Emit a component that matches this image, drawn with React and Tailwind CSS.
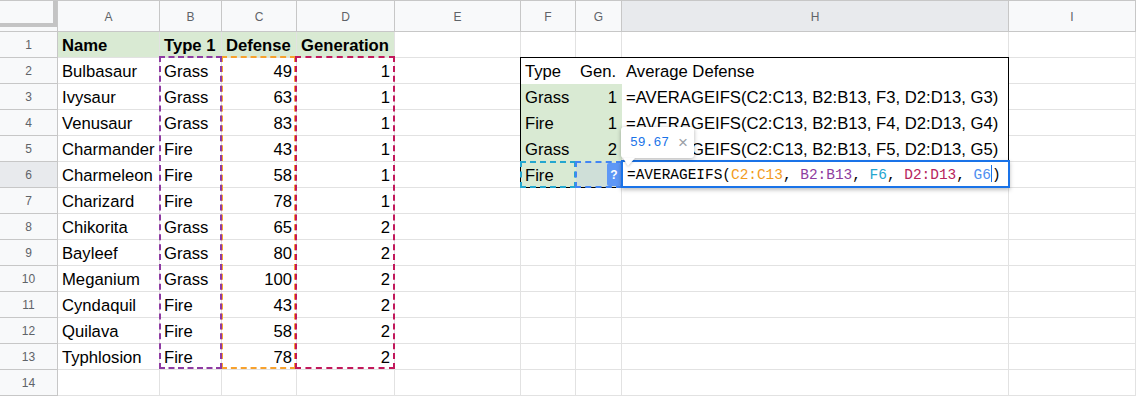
import React from 'react';

const COLS = ['A', 'B', 'C', 'D', 'E', 'F', 'G', 'H', 'I'];

const pokemon = [
    ['Bulbasaur', 'Grass', 49, 1],
    ['Ivysaur', 'Grass', 63, 1],
    ['Venusaur', 'Grass', 83, 1],
    ['Charmander', 'Fire', 43, 1],
    ['Charmeleon', 'Fire', 58, 1],
    ['Charizard', 'Fire', 78, 1],
    ['Chikorita', 'Grass', 65, 2],
    ['Bayleef', 'Grass', 80, 2],
    ['Meganium', 'Grass', 100, 2],
    ['Cyndaquil', 'Fire', 43, 2],
    ['Quilava', 'Fire', 58, 2],
    ['Typhlosion', 'Fire', 78, 2],
];

// summary table in F2:H6
const summary = {
    2: ['Type', 'Gen.', 'Average Defense'],
    3: ['Grass', 1, '=AVERAGEIFS(C2:C13, B2:B13, F3, D2:D13, G3)'],
    4: ['Fire', 1, '=AVERAGEIFS(C2:C13, B2:B13, F4, D2:D13, G4)'],
    5: ['Grass', 2, '=AVERAGEIFS(C2:C13, B2:B13, F5, D2:D13, G5)'],
    6: ['Fire', '', ''],
};

function Cell({ children, right, bold, green, inBox, bg }) {
    const border = inBox ? 'border-transparent' : 'border-[#e2e2e2]';
    const fill = bg || (green ? 'bg-[#d9ead3]' : 'bg-white');
    return (
        <div
            className={`h-[26px] border-r border-b ${border} ${fill} flex items-center px-[4px] pt-[1px] whitespace-nowrap overflow-visible ${right ? 'justify-end' : ''} ${bold ? 'font-bold' : ''}`}
        >
            {children}
        </div>
    );
}

function RowHeader({ n, active }) {
    return (
        <div
            className={`h-[26px] border-r border-b border-[#c7c7c7] ${active ? 'bg-[#e8eaed]' : 'bg-[#f8f9fa]'} flex items-center justify-center text-[12px] text-[#5f6368]`}
        >
            {n}
        </div>
    );
}

function Row({ n }) {
    const cells = [];
    if (n === 1) {
        cells.push(
            <Cell key="a" bold green>Name</Cell>,
            <Cell key="b" bold green>Type 1</Cell>,
            <Cell key="c" bold green>Defense</Cell>,
            <Cell key="d" bold green>Generation</Cell>
        );
    } else if (n <= 13) {
        const p = pokemon[n - 2];
        cells.push(
            <Cell key="a">{p[0]}</Cell>,
            <Cell key="b">{p[1]}</Cell>,
            <Cell key="c" right>{p[2]}</Cell>,
            <Cell key="d" right>{p[3]}</Cell>
        );
    } else {
        cells.push(<Cell key="a" />, <Cell key="b" />, <Cell key="c" />, <Cell key="d" />);
    }
    cells.push(<Cell key="e" />);

    const s = summary[n];
    if (s) {
        const green = n > 2;
        cells.push(
            <Cell key="f" inBox green={green}>{s[0]}</Cell>,
            <Cell key="g" inBox green={green && n !== 6} bg={n === 6 ? 'bg-[#cfdfd8]' : ''} right={n > 2}>
                {s[1]}
            </Cell>,
            <Cell key="h" inBox>{s[2]}</Cell>
        );
    } else {
        cells.push(<Cell key="f" />, <Cell key="g" />, <Cell key="h" />);
    }
    cells.push(<Cell key="i" />);

    return (
        <>
            <RowHeader n={n} active={n === 6} />
            {cells}
        </>
    );
}

function Tooltip() {
    return (
        <div className="absolute left-[621px] top-[127px]">
            <div className="w-[73px] h-[31px] bg-white rounded-[3px] shadow-[0_1px_4px_rgba(0,0,0,0.3)] flex items-center pl-[9px] gap-[9px]">
                <span className="font-['Liberation_Mono',monospace] text-[13px] text-[#1a73e8]">59.67</span>
                <span className="text-[#9aa0a6] text-[17px] leading-none">×</span>
            </div>
            <div className="ml-[2px] w-0 h-0 border-l-[5px] border-r-[7px] border-t-[8px] border-l-transparent border-r-transparent border-t-white drop-shadow-[0_1px_1px_rgba(0,0,0,0.2)]" />
        </div>
    );
}

function FormulaEditor() {
    return (
        <div className="absolute left-[621px] top-[160px] w-[389px] h-[28px] border-2 border-[#1a73e8] bg-white shadow-[0_2px_4px_rgba(0,0,0,0.25)] pl-[4px] pt-[2px] font-['Liberation_Mono',monospace] text-[14.45px] leading-[22px] text-black whitespace-pre">
            =AVERAGEIFS(<span className="text-[#f29b1d]">C2:C13</span>, <span className="text-[#8e3c9e]">B2:B13</span>, <span className="text-[#24a7cf]">F6</span>, <span className="text-[#b7245c]">D2:D13</span>, <span className="text-[#4f8ff0]">G6</span><span className="inline-block w-px h-[17px] align-[-3px] bg-[#1a73e8]" />)
        </div>
    );
}

export default function App() {
    const rows = Array.from({ length: 14 }, (_, i) => i + 1);

    return (
        <div className="relative w-[1136px] h-[397px] overflow-hidden bg-white font-['Liberation_Sans',Arial,sans-serif] text-[16.67px] text-black">
            <div className="grid grid-cols-[58px_102px_62px_75px_98px_126px_55px_46px_387px_1fr]">
                {/* column headers */}
                <div className="h-[32px] border-t border-b border-r border-[#c7c7c7] bg-[#f8f9fa]">
                    <div className="h-[26px] border-r-4 border-b-4 border-[#c4c4c4]" />
                </div>
                {COLS.map((c) => (
                    <div
                        key={c}
                        className={`h-[32px] border-t border-b border-r border-[#c7c7c7] ${c === 'H' ? 'bg-[#e8eaed]' : 'bg-[#f8f9fa]'} flex items-center justify-center pt-[2px] text-[12px] text-[#5f6368]`}
                    >
                        {c}
                    </div>
                ))}

                {rows.map((n) => (
                    <Row key={n} n={n} />
                ))}
            </div>

            {/* referenced ranges */}
            <div className="absolute left-[221px] top-[56px] w-[75px] h-[313px] border-2 border-dashed border-[#f7a12d]" />
            <div className="absolute left-[159px] top-[56px] w-[63px] h-[313px] border-2 border-dashed border-[#8e3aa2]" />
            <div className="absolute left-[295px] top-[56px] w-[100px] h-[313px] border-2 border-dashed border-[#c2185b]" />

            {/* summary table border */}
            <div className="absolute left-[520px] top-[57px] w-[489px] h-[131px] border border-black" />

            {/* F6 / G6 refs */}
            <div className="absolute left-[520px] top-[161px] w-[56px] h-[27px] border-2 border-dashed border-[#24a7cf]" />
            <div className="absolute left-[575px] top-[161px] w-[47px] h-[27px] border-2 border-dashed border-[#4285f4]" />
            <div className="absolute left-[607px] top-[163px] w-[14px] h-[23px] bg-[#5e97f6] rounded-[2px] flex items-center justify-center text-white text-[12px] font-bold">
                ?
            </div>

            <FormulaEditor />
            <Tooltip />
        </div>
    );
}
